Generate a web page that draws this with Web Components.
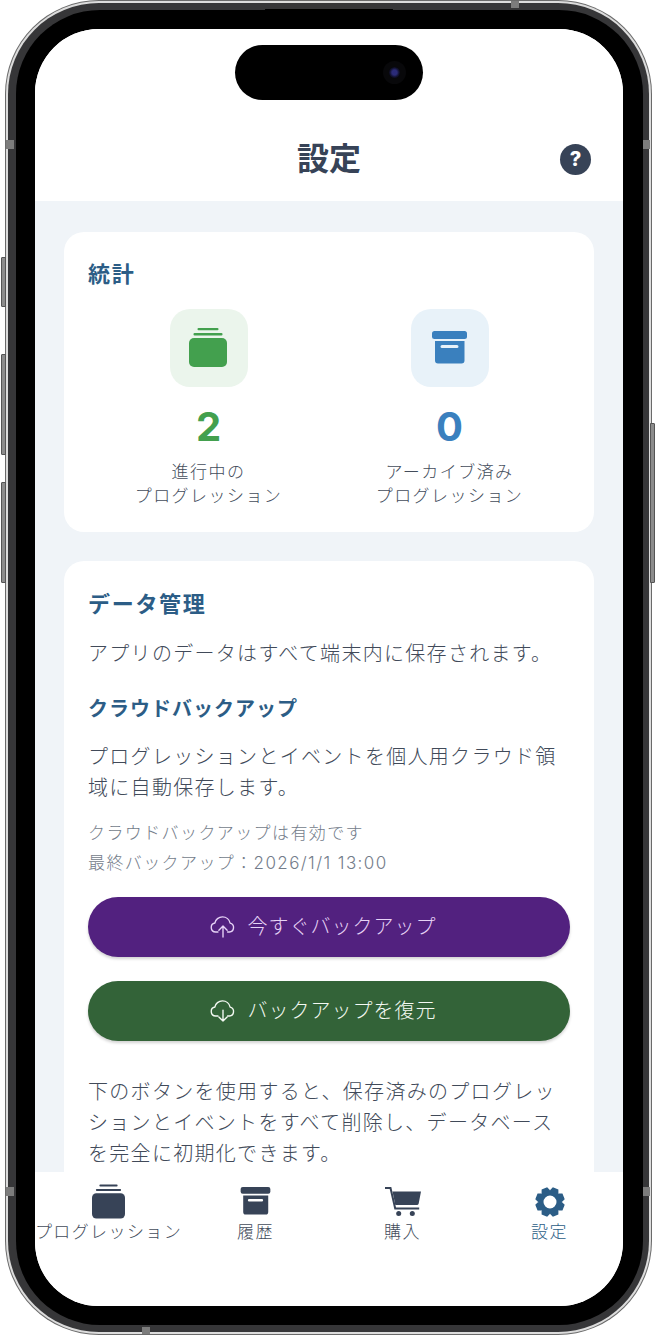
<!DOCTYPE html>
<html lang="ja">
<head>
<meta charset="utf-8">
<title>設定</title>
<style>
html, body { margin: 0; background: #fff; }
body { font-family: Inter, "Noto Sans CJK JP", sans-serif; }
</style>
</head>
<body>
<phone-frame>
    <app-header title="設定"></app-header>
    <settings-page>
        <app-card heading="統計" small>
            <div style="display:grid;grid-template-columns:1fr 1fr">
                <stat-box kind="green" value="2" line1="進行中の" line2="プログレッション"></stat-box>
                <stat-box kind="blue" value="0" line1="アーカイブ済み" line2="プログレッション"></stat-box>
            </div>
        </app-card>
        <app-card heading="データ管理">
            <data-panel></data-panel>
        </app-card>
    </settings-page>
    <tab-bar></tab-bar>
</phone-frame>

<script>
function gearPath(){
    // 8 teeth, turned so a notch sits at the top
    let d = '';
    for(let i = 0; i < 8; i++){
        let mid = (22.5 + i * 45) * Math.PI / 180;
        let pts = [[11.6, -.42], [15, -.2], [15, .2], [11.6, .42]];
        pts.forEach(p => {
            let x = 15 + p[0] * Math.cos(mid + p[1]);
            let y = 15 + p[0] * Math.sin(mid + p[1]);
            d += (d ? 'L' : 'M') + x.toFixed(2) + ' ' + y.toFixed(2);
        });
    }
    return d + 'ZM15 8.500a6.500 6.500 0 1 0 0 13 6.500 6.500 0 0 0 0-13Z';
}

const CLOUD = 'M8.500 17.500H6a5 5 0 0 1-.8-9.900C5.800 3.800 9.300 1 13.400 1c4.300 0 7.600 2.900 8.400 6.700a5 5 0 0 1-.8 9.800h-2';

const ICONS = {
    stack: `<svg viewBox="0 0 38 39" width="100%" height="100%"><rect x="0" y="10" width="38" height="29" rx="5" fill="currentColor"/><rect x="4.500" y="5" width="29" height="2.400" rx="1" fill="currentColor"/><rect x="8.500" y="0" width="21" height="2.200" rx="1" fill="currentColor"/></svg>`,
    archive: `<svg viewBox="0 0 35 33" width="100%" height="100%"><rect x="0" y="0" width="35" height="8" rx="2.500" fill="currentColor"/><path fill-rule="evenodd" fill="currentColor" d="M3 10h29.500v19.500a3 3 0 0 1-3 3h-23.500a3 3 0 0 1-3-3zM10 14a1 1 0 0 0 0 3h15a1 1 0 0 0 0-3z"/></svg>`,
    cart: `<svg viewBox="0 0 36 30" width="100%" height="100%"><circle cx="13.700" cy="26.500" r="2.500" fill="currentColor"/><circle cx="27.300" cy="26.500" r="2.500" fill="currentColor"/><path d="M0 1h5.500l4.700 20.500h24" fill="none" stroke="currentColor" stroke-width="2"/><path d="M7.500 4.500H36l-2.300 12a2 2 0 0 1-2 1.600H10.300z" fill="currentColor"/></svg>`,
    gear: `<svg viewBox="0 0 30 30" width="100%" height="100%"><path fill="currentColor" fill-rule="evenodd" d="${gearPath()}"/></svg>`,
    cloudUp: `<svg viewBox="0 0 28 24" width="100%" height="100%" fill="none" stroke="currentColor" stroke-width="1.500" stroke-linecap="round" stroke-linejoin="round"><path d="${CLOUD}"/><path d="M14 23V11M9.500 15.500 14 11l4.500 4.500"/></svg>`,
    cloudDown: `<svg viewBox="0 0 28 24" width="100%" height="100%" fill="none" stroke="currentColor" stroke-width="1.500" stroke-linecap="round" stroke-linejoin="round"><path d="${CLOUD}"/><path d="M14 11v12M9.500 18.500 14 23l4.500-4.500"/></svg>`
};

class PhoneFrame extends HTMLElement {
    constructor() {
        super();
        this.attachShadow({mode: 'open'}).innerHTML = `
            <style>
                :host { display: block; width: 656px; height: 1336px; position: relative; overflow: hidden; background: #fff; }
                .body {
                    box-sizing: border-box; width: 647px; height: 1335px; margin-left: 5px;
                    padding: 1px; border-radius: 94px; background: #6a6a6a;
                }
                .rim { box-sizing: border-box; height: 100%; padding: 2px; border-radius: 93px; background: #dcdcdc; }
                .band { box-sizing: border-box; height: 100%; padding: 7px 6px 7px 8px; border-radius: 91px; background: #363638; }
                .bezel { box-sizing: border-box; height: 100%; padding: 19px 20px 19px 19px; border-radius: 84px; background: #000; }
                .screen {
                    position: relative; height: 100%; border-radius: 64px; overflow: hidden; background: #fff;
                    display: flex; flex-direction: column;
                }
                .island {
                    position: absolute; left: 200px; top: 16px; width: 188px; height: 55px;
                    border-radius: 28px; background: #000;
                }
                .lens {
                    position: absolute; right: 23px; top: 22px; width: 11px; height: 11px; border-radius: 50%;
                    background: radial-gradient(circle, #2b2b78 0 32%, #10102a 60%, #08080e 100%);
                    box-shadow: 0 0 0 6px #08080a;
                }
                .key { position: absolute; left: 1px; width: 5px; box-sizing: border-box; background: #8c8c8c; border: 1px solid #555; border-radius: 1px 0 0 1px; }
                .key.r { left: auto; right: 1px; border-radius: 0 1px 1px 0; }
                .speaker { position: absolute; left: 265px; top: 9px; width: 128px; height: 4px; background: #000; border-radius: 0 0 4px 4px; }
                .ant { position: absolute; background: #7c7c7c; }
            </style>
            <div class="body"><div class="rim"><div class="band"><div class="bezel">
                <div class="screen"><slot></slot><div class="island"><div class="lens"></div></div></div>
            </div></div></div></div>
            <div class="speaker"></div>
            <div class="ant" style="left:511px;top:1px;width:8px;height:7px"></div>
            <div class="ant" style="left:6px;top:140px;width:8px;height:9px"></div>
            <div class="ant" style="right:6px;top:140px;width:7px;height:9px"></div>
            <div class="ant" style="left:142px;top:1327px;width:8px;height:7px"></div>
            <div class="ant" style="left:6px;top:1187px;width:8px;height:9px"></div>
            <div class="ant" style="right:6px;top:1187px;width:7px;height:9px"></div>
            <div class="key" style="top:257px;height:50px"></div>
            <div class="key" style="top:354px;height:101px"></div>
            <div class="key" style="top:482px;height:101px"></div>
            <div class="key r" style="top:423px;height:160px"></div>
        `;
    }
}

class AppHeader extends HTMLElement {
    constructor() {
        super();
        this.attachShadow({mode: 'open'}).innerHTML = `
            <style>
                :host { display: flex; flex: none; height: 172px; box-sizing: border-box; padding-top: 107px; position: relative; justify-content: center; background: #fff; }
                h1 { margin: 0; font: 700 32px/46px Inter, "Noto Sans CJK JP", sans-serif; color: #374357; }
                .help {
                    position: absolute; right: 32px; top: 115px; width: 31px; height: 31px; border-radius: 50%;
                    background: #374357; color: #fff; display: flex; align-items: center; justify-content: center;
                    font: 800 20px/31px Inter, sans-serif;
                }
            </style>
            <h1>${this.getAttribute('title')}</h1>
            <div class="help">?</div>
        `;
    }
}

class SettingsPage extends HTMLElement {
    constructor() {
        super();
        this.attachShadow({mode: 'open'}).innerHTML = `
            <style>
                :host {
                    display: flex; flex-direction: column; gap: 29px; flex: 1; min-height: 0; overflow: hidden;
                    box-sizing: border-box; padding: 31px 29px 0; background: #f0f4f8;
                }
            </style>
            <slot></slot>
        `;
    }
}

class AppCard extends HTMLElement {
    constructor() {
        super();
        let small = this.hasAttribute('small');
        this.attachShadow({mode: 'open'}).innerHTML = `
            <style>
                :host { display: block; flex: none; background: #fff; border-radius: 20px; box-sizing: border-box; padding: ${small ? 24 : 25}px 24px 24px; }
                h2 { margin: 0 0 17px; font: 700 22px/36px Inter, "Noto Sans CJK JP", sans-serif; color: #2c5d86; letter-spacing: 1.700px; }
            </style>
            <h2>${this.getAttribute('heading')}</h2>
            <slot></slot>
        `;
    }
}

class StatBox extends HTMLElement {
    constructor() {
        super();
        let kind = this.getAttribute('kind');
        let color = kind === 'green' ? '#43a04e' : '#3a80be';
        let tint = kind === 'green' ? '#ebf5ec' : '#e8f2f9';
        let icon = kind === 'green'
            ? `<div style="width:38px;height:39px;margin:-2px 1px 0 0">${ICONS.stack}</div>`
            : `<div style="width:35px;height:33px;margin:-1px 1px 0 0">${ICONS.archive}</div>`;
        this.attachShadow({mode: 'open'}).innerHTML = `
            <style>
                :host { display: flex; flex-direction: column; align-items: center; }
                .tile { width: 78px; height: 78px; border-radius: 20px; background: ${tint}; color: ${color}; display: flex; align-items: center; justify-content: center; }
                .num { margin-top: 16px; font: 700 40px/48px Inter, sans-serif; color: ${color}; }
                .lbl { margin-top: 9px; font: 300 17px/24px Inter, "Noto Sans CJK JP", sans-serif; color: #434c5b; letter-spacing: 1.450px; text-align: center; white-space: nowrap; }
            </style>
            <div class="tile">${icon}</div>
            <div class="num">${this.getAttribute('value')}</div>
            <div class="lbl">${this.getAttribute('line1')}<br>${this.getAttribute('line2')}</div>
        `;
    }
}

class ActionButton extends HTMLElement {
    constructor() {
        super();
        this.attachShadow({mode: 'open'}).innerHTML = `
            <style>
                :host {
                    display: flex; height: 60px; box-sizing: border-box; padding-right: 12px;
                    align-items: center; justify-content: center; gap: 12px;
                    border-radius: 30px; background: var(--bg); color: var(--fg);
                    box-shadow: 0 2px 3px rgba(0,0,0,.18);
                    font: 300 20px/30px Inter, "Noto Sans CJK JP", sans-serif; letter-spacing: 1px;
                }
                .ic { width: 26px; height: 22px; }
            </style>
            <div class="ic">${ICONS[this.getAttribute('icon')]}</div>
            <slot></slot>
        `;
    }
}

class DataPanel extends HTMLElement {
    constructor() {
        super();
        this.attachShadow({mode: 'open'}).innerHTML = `
            <style>
                :host { display: block; color: #414a59; font: 300 20px/31px Inter, "Noto Sans CJK JP", sans-serif; letter-spacing: 1.300px; }
                p { margin: 0; }
                h3 { margin: 23px 0 17px; font: 700 20px/32px Inter, "Noto Sans CJK JP", sans-serif; color: #2c5d86; letter-spacing: 1px; }
                .note { margin-top: 14px; font-size: 17px; line-height: 30px; color: #737c8a; letter-spacing: 1.400px; }
                .acts { display: flex; flex-direction: column; gap: 24px; margin: 19px 0 36px; }
            </style>
            <p>アプリのデータはすべて端末内に保存されます。</p>
            <h3>クラウドバックアップ</h3>
            <p>プログレッションとイベントを個人用クラウド領域に自動保存します。</p>
            <div class="note">クラウドバックアップは有効です<br>最終バックアップ：2026/1/1 13:00</div>
            <div class="acts">
                <action-button icon="cloudUp" style="--bg:#52217f;--fg:#e6d3f6">今すぐバックアップ</action-button>
                <action-button icon="cloudDown" style="--bg:#336338;--fg:#f4f9f3">バックアップを復元</action-button>
            </div>
            <p>下のボタンを使用すると、保存済みのプログレッションとイベントをすべて削除し、データベースを完全に初期化できます。</p>
        `;
    }
}

class TabBar extends HTMLElement {
    constructor() {
        super();
        let tabs = [
            {label: 'プログレッション', icon: 'stack', w: 33, h: 35, y: 12},
            {label: '履歴', icon: 'archive', w: 31, h: 28, y: 15},
            {label: '購入', icon: 'cart', w: 36, h: 30, y: 15},
            {label: '設定', icon: 'gear', w: 30, h: 30, y: 15, on: true}
        ];
        let html = tabs.map(t => `
            <div class="tab ${t.on ? 'on' : ''}">
                <div class="slot"><div style="width:${t.w}px;height:${t.h}px;margin-top:${t.y}px">${ICONS[t.icon]}</div></div>
                <div class="lbl">${t.label}</div>
            </div>`).join('');
        this.attachShadow({mode: 'open'}).innerHTML = `
            <style>
                :host { display: grid; grid-template-columns: repeat(4, 1fr); flex: none; height: 134px; background: #fff; }
                .tab { display: flex; flex-direction: column; align-items: center; color: #374357; min-width: 0; }
                .slot { height: 48px; }
                .lbl { font: 300 17px/24px Inter, "Noto Sans CJK JP", sans-serif; letter-spacing: 1.400px; color: #434c5b; white-space: nowrap; }
                .on, .on .lbl { color: #2c5d86; }
            </style>
            ${html}
        `;
    }
}

customElements.define('phone-frame', PhoneFrame);
customElements.define('app-header', AppHeader);
customElements.define('settings-page', SettingsPage);
customElements.define('app-card', AppCard);
customElements.define('stat-box', StatBox);
customElements.define('action-button', ActionButton);
customElements.define('data-panel', DataPanel);
customElements.define('tab-bar', TabBar);
</script>
</body>
</html>
